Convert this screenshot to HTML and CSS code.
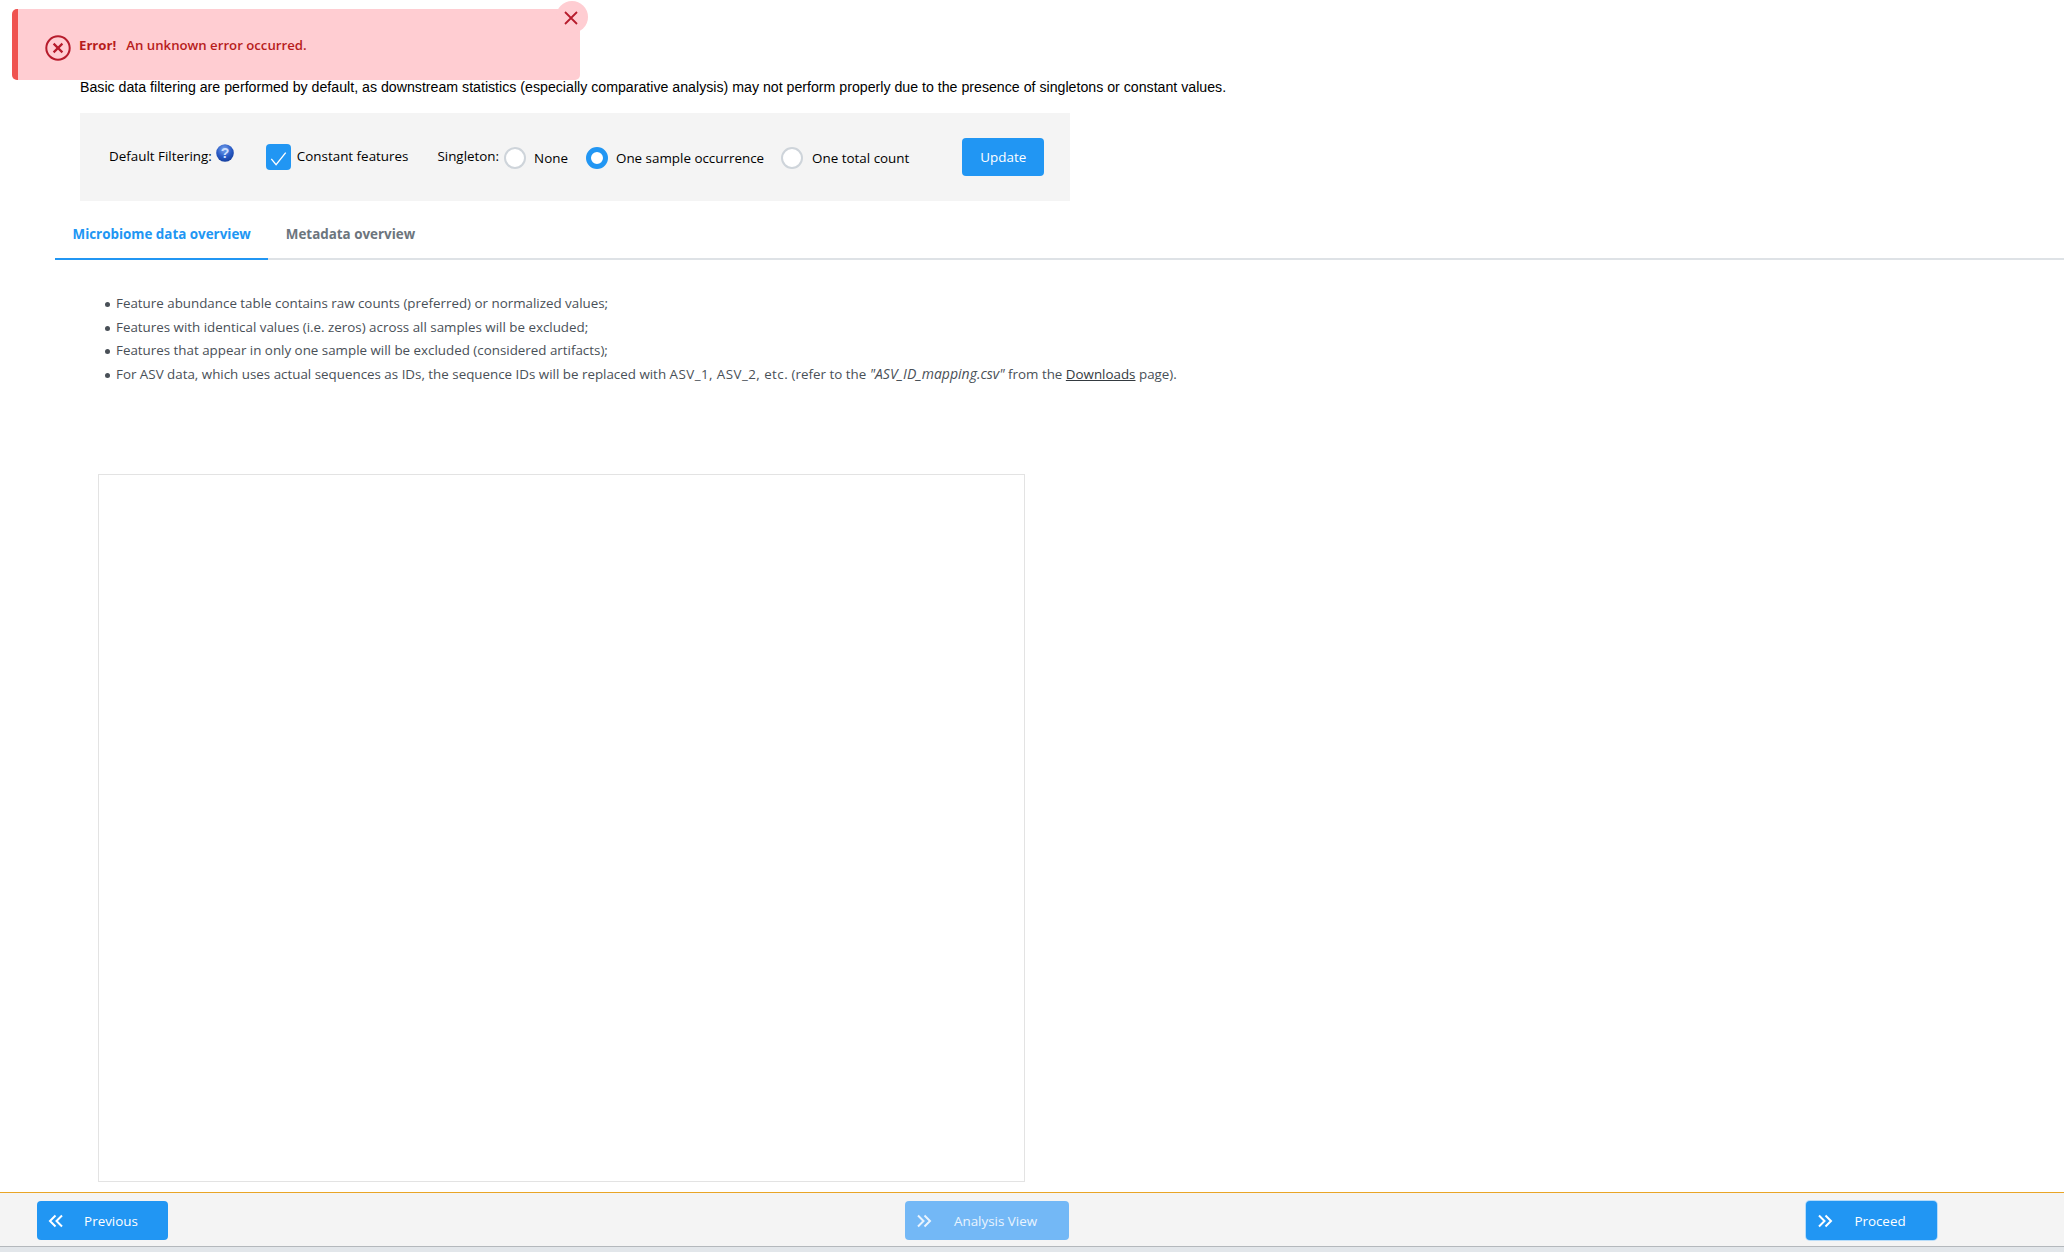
FILE: index.html
```html
<!DOCTYPE html>
<html lang="en">
<head>
<meta charset="utf-8">
<title>Data filtering</title>
<link rel="stylesheet" href="styles.css">
</head>
<body>
<div class="alert">
  <svg class="alert-icon" viewBox="0 0 26 26" aria-hidden="true"><circle cx="13" cy="13" r="11.700" fill="none" stroke="#b71c2c" stroke-width="2"/><path d="M8.600 8.600l8.800 8.800M17.400 8.600l-8.800 8.800" fill="none" stroke="#b71c2c" stroke-width="2.200"/></svg>
  <span class="alert-title">Error!</span>
  <span class="alert-text">An unknown error occurred.</span>
  <button class="alert-close" type="button" aria-label="Close"><svg viewBox="0 0 16 16" aria-hidden="true"><path d="M2 2l12 12M14 2L2 14" fill="none" stroke="#b71c2c" stroke-width="1.800"/></svg></button>
</div>
<main class="page">
  <p class="intro">Basic data filtering are performed by default, as downstream statistics (especially comparative analysis) may not perform properly due to the presence of singletons or constant values.</p>
  <section class="panel">
    <span class="panel-label">Default Filtering:</span>
    <svg class="help" viewBox="0 0 18 18" aria-hidden="true"><defs><radialGradient id="hg" cx="45%" cy="30%" r="75%"><stop offset="0" stop-color="#7ba5ee"/><stop offset="0.55" stop-color="#2a5cc6"/><stop offset="1" stop-color="#123a98"/></radialGradient></defs><circle cx="9" cy="9" r="8.800" fill="url(#hg)"/><text x="9" y="14" text-anchor="middle" class="help-q">?</text></svg>
    <span class="check"><svg viewBox="0 0 26 26" aria-hidden="true"><path d="M5.500 15l5 6L20.500 8.500" fill="none" stroke="#fff" stroke-width="1.400"/></svg></span>
    <span class="check-label">Constant features</span>
    <span class="single-label">Singleton:</span>
    <span class="radio"></span><span class="radio-label none">None</span>
    <span class="radio on"></span><span class="radio-label sample">One sample occurrence</span>
    <span class="radio"></span><span class="radio-label total">One total count</span>
    <button class="btn update" type="button">Update</button>
  </section>
  <nav class="tabs">
    <a class="tab active">Microbiome data overview</a>
    <a class="tab">Metadata overview</a>
  </nav>
  <ul class="notes">
    <li>Feature abundance table contains raw counts (preferred) or normalized values;</li>
    <li>Features with identical values (i.e. zeros) across all samples will be excluded;</li>
    <li>Features that appear in only one sample will be excluded (considered artifacts);</li>
    <li>For ASV data, which uses actual sequences as IDs, the sequence IDs will be replaced with <span class="ids">ASV_1, ASV_2, etc.</span> (refer to the <em>"ASV_ID_mapping.csv"</em> from the <u>Downloads</u> page).</li>
  </ul>
  <div class="plot"></div>
</main>
<footer class="footer">
  <button class="btn nav" type="button"><svg viewBox="0 0 16 14" aria-hidden="true"><path d="M7.500 1.500L2 7l5.500 5.500M14 1.500L8.500 7l5.500 5.500" fill="none" stroke="currentColor" stroke-width="2"/></svg><span>Previous</span></button>
  <button class="btn nav analysis" type="button"><svg viewBox="0 0 16 14" aria-hidden="true"><path d="M2 1.500L7.500 7 2 12.500M8.500 1.500L14 7l-5.500 5.500" fill="none" stroke="currentColor" stroke-width="2"/></svg><span>Analysis View</span></button>
  <button class="btn nav proceed" type="button"><svg viewBox="0 0 16 14" aria-hidden="true"><path d="M2 1.500L7.500 7 2 12.500M8.500 1.500L14 7l-5.500 5.500" fill="none" stroke="currentColor" stroke-width="2"/></svg><span>Proceed</span></button>
</footer>
<div class="statusbar"></div>
</body>
</html>
```
FILE: styles.css
```css
* { box-sizing: border-box; }
html, body { margin: 0; height: 100%; }
body {
  display: flex;
  flex-direction: column;
  height: 1252px;
  overflow: hidden;
  background: #fff;
  font-family: "Open Sans", "Noto Sans", sans-serif;
  font-size: 13.400px;
  color: #212529;
}
.alert {
  position: absolute;
  left: 12px;
  top: 9px;
  width: 568px;
  height: 71px;
  display: flex;
  align-items: center;
  padding-left: 27px;
  background: #ffcdd2;
  border-left: 6px solid #ef5350;
  border-radius: 5px;
  color: #b71c1c;
  font-size: 13.200px;
}
.alert-icon { width: 26px; height: 26px; margin-top: 6px; }
.alert-title { margin-left: 8px; font-weight: 700; }
.alert-text { margin-left: 10px; font-weight: 600; }
.alert-close {
  position: absolute;
  right: -8px;
  top: -8px;
  display: flex;
  align-items: center;
  justify-content: center;
  width: 32px;
  height: 32px;
  padding: 1px 3px 0 0;
  border: 0;
  border-radius: 50%;
  background: #ffcdd2;
}
.alert-close svg { display: block; width: 16px; height: 16px; }
.page { flex: 1; min-height: 0; }
.intro {
  margin: 78px 0 0 80px;
  font-family: "Liberation Sans", Arial, sans-serif;
  font-size: 14.180px;
  line-height: 18px;
  color: #000;
}
.panel {
  display: flex;
  align-items: center;
  width: 990px;
  height: 88px;
  margin: 17px 0 0 80px;
  padding-left: 29px;
  background: #f4f4f4;
  color: #000;
}
.panel-label { margin-top: -2px; }
.help { width: 18px; height: 18px; margin: -8px 0 0 4px; }
.help-q { font: 700 14px "Liberation Sans", sans-serif; fill: #cfe0ff; }
.check {
  width: 25px;
  height: 26px;
  margin-left: 32px;
  border-radius: 4px;
  background: #2196f3;
}
.check svg { display: block; width: 25px; height: 26px; }
.check-label { margin: -2px 0 0 6px; }
.single-label { margin: -2px 0 0 29px; }
.radio {
  width: 22px;
  height: 22px;
  margin: 2px 0 0 5px;
  border: 2px solid #ced4da;
  border-radius: 50%;
  background: #fff;
}
.radio.on { border: 5px solid #2196f3; margin-left: 18px; }
.radio-label { margin: 2px 0 0 8px; }
.radio-label.sample + .radio { margin-left: 17px; }
.radio-label.total { margin-left: 9px; }
.btn {
  border: 0;
  border-radius: 4px;
  background: #2196f3;
  color: #fff;
  font-family: inherit;
  font-size: 13.400px;
}
.update { width: 82px; height: 38px; margin: 0 0 0 53px; }
.tabs {
  display: flex;
  height: 59px;
  margin-left: 55px;
  border-bottom: 2px solid #dee2e6;
  font-size: 13.400px;
  font-weight: 700;
  color: #6c757d;
}
.tab {
  display: flex;
  align-items: center;
  height: 59px;
  padding: 8px 17.500px 0;
  border-bottom: 2px solid transparent;
}
.tab.active { color: #2196f3; border-bottom-color: #2196f3; }
.notes {
  margin: 32px 0 0;
  padding: 0 0 0 116px;
  list-style: none;
  font-size: 13.370px;
  color: #495057;
  line-height: 23.500px;
}
.notes li { position: relative; }
.notes li::before {
  content: "";
  position: absolute;
  left: -11px;
  top: 10px;
  width: 5px;
  height: 5px;
  border-radius: 50%;
  background: #495057;
}
.notes .ids { letter-spacing: 0.450px; }
.notes em { font-size: 14px; line-height: 0; }
.notes u { color: #343a40; }
.plot {
  width: 927px;
  height: 708px;
  margin: 88px 0 0 98px;
  border: 1px solid #e3e3e3;
}
.footer {
  display: flex;
  justify-content: space-between;
  align-items: center;
  height: 54px;
  padding: 2px 127px 0 37px;
  background: #f4f4f4;
  border-top: 1px solid #e9a526;
}
.nav {
  display: flex;
  align-items: center;
  width: 131px;
  height: 39px;
  padding: 0 0 0 11px;
}
.nav svg { flex: none; width: 16px; height: 14px; }
.nav span { flex: 1; text-align: center; padding-right: 10px; }
.analysis { width: 164px; background: #73b8f6; color: #e9f4fe; }
.proceed { box-shadow: 0 0 0 1px #b6dcfa; }
.statusbar {
  height: 6px;
  background: #e2e6ea;
  border-top: 1px solid #b4b8bc;
}
```
